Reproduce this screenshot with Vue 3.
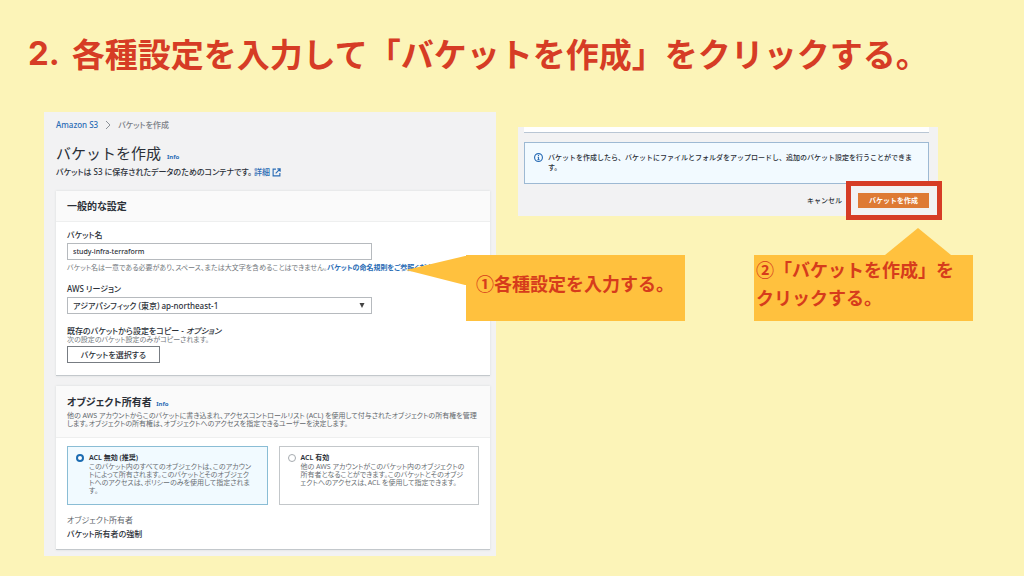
<script setup>
import { ref } from 'vue'

const bucketName = ref('study-infra-terraform')
const region = ref('ap-northeast-1')
const acl = ref('disabled')

const aclOptions = [
  {
    id: 'disabled',
    title: 'ACL 無効 (推奨)',
    lines: [
      'このバケット内のすべてのオブジェクトは、このアカウン',
      'トによって所有されます。このバケットとそのオブジェク',
      'トへのアクセスは、ポリシーのみを使用して指定されま',
      'す。',
    ],
  },
  {
    id: 'enabled',
    title: 'ACL 有効',
    lines: [
      '他の AWS アカウントがこのバケット内のオブジェクトの',
      '所有者となることができます。このバケットとそのオブジ',
      'ェクトへのアクセスは、ACL を使用して指定できます。',
    ],
  },
]
</script>

<template>
  <main class="slide">
    <h1 class="slide-title"><span class="step">2.</span><span>各種設定を入力して「バケットを作成」をクリックする。</span></h1>

    <div class="columns">
      <section class="panel console">
        <nav class="crumbs">
          <a href="#">Amazon S3</a>
          <svg class="chevron" viewBox="0 0 6 10"><path d="M1 1l4 4-4 4" /></svg>
          <span>バケットを作成</span>
        </nav>

        <h2 class="page-title">バケットを作成 <a class="info" href="#">Info</a></h2>
        <p class="lead">
          バケットは S3 に保存されたデータのためのコンテナです。
          <a href="#">詳細
            <svg class="external" viewBox="0 0 16 16"><path d="M7 2H2v12h12V9M9.500 1.500H14.500V6.500M14 2L6.500 9.500" /></svg>
          </a>
        </p>

        <section class="card general">
          <header class="card-head"><h3>一般的な設定</h3></header>
          <div class="card-body">
            <div class="field">
              <label for="bucket">バケット名</label>
              <input id="bucket" v-model="bucketName" class="control" type="text" />
              <p class="hint">バケット名は一意である必要があり、スペース、または大文字を含めることはできません。<a href="#">バケットの命名規則をご参照ください</a></p>
            </div>
            <div class="field">
              <label for="region">AWS リージョン</label>
              <div class="select-wrap">
                <select id="region" v-model="region" class="control">
                  <option value="ap-northeast-1">アジアパシフィック (東京) ap-northeast-1</option>
                </select>
                <svg class="caret" viewBox="0 0 6 6"><path d="M0 0h6L3 6z" /></svg>
              </div>
            </div>
            <div class="field">
              <span class="label">既存のバケットから設定をコピー - <i>オプション</i></span>
              <p class="hint near">次の設定のバケット設定のみがコピーされます。</p>
              <button class="choose" type="button">バケットを選択する</button>
            </div>
          </div>
        </section>

        <section class="card">
          <header class="card-head tall">
            <h3>オブジェクト所有者 <a class="info" href="#">Info</a></h3>
            <p class="hint dark">他の AWS アカウントからこのバケットに書き込まれ、アクセスコントロールリスト (ACL) を使用して付与されたオブジェクトの所有権を管理<br />します。オブジェクトの所有権は、オブジェクトへのアクセスを指定できるユーザーを決定します。</p>
          </header>
          <div class="card-body owner">
            <div class="tiles">
              <label v-for="o in aclOptions" :key="o.id" class="tile" :class="{ on: acl === o.id }">
                <input v-model="acl" type="radio" name="acl" :value="o.id" />
                <span class="tile-text">
                  <b>{{ o.title }}</b>
                  <span v-for="l in o.lines" :key="l" class="line">{{ l }}</span>
                </span>
              </label>
            </div>
            <dl>
              <dt>オブジェクト所有者</dt>
              <dd>バケット所有者の強制</dd>
            </dl>
          </div>
        </section>

        <aside class="callout first">
          <svg class="tail-left" viewBox="0 0 60 30"><path d="M0 15L59 1H60V30H59z" /></svg>
          ①各種設定を入力する。
        </aside>
      </section>

      <section class="panel footer-panel">
        <div class="card-end"></div>
        <div class="notice">
          <svg class="notice-icon" viewBox="0 0 16 16"><circle cx="8" cy="8" r="7" /><path d="M8 3.500v2M6.500 7.500H8v4.500M6 12h4" /></svg>
          <p>バケットを作成したら、バケットにファイルとフォルダをアップロードし、追加のバケット設定を行うことができま<br />す。</p>
        </div>
        <div class="actions">
          <button class="cancel" type="button">キャンセル</button>
          <div class="target">
            <button class="create" type="button">バケットを作成</button>
          </div>
        </div>

        <aside class="callout second">
          <svg class="tail-up" viewBox="0 0 66 27"><path d="M0 27L33 0l33 27z" /></svg>
          ②「バケットを作成」を<br />クリックする。
        </aside>
      </section>
    </div>
  </main>
</template>

<style>
html {
  background: #fcf4b8;
}
</style>

<style scoped>
.slide {
  min-height: 100vh;
  box-sizing: border-box;
  padding: 28px 86px 20px 44px;
  overflow: hidden;
  background: #fcf4b8;
  color: #2b3038;
  font-family: "Noto Sans", "Noto Sans CJK JP", sans-serif;
  font-size: 8px;
  line-height: 10px;
}
h1, h2, h3, p, dl, dd {
  margin: 0;
}
a {
  color: #2a6cb5;
  text-decoration: none;
}
button, input, select {
  font: inherit;
  color: inherit;
}
svg {
  fill: none;
  stroke: currentColor;
}
.slide-title {
  display: flex;
  gap: 12px;
  margin: 0 -60px 34px -16px;
  font-family: "Noto Sans CJK JP", sans-serif;
  font-size: 33px;
  line-height: 50px;
  font-weight: 700;
  color: #d63c25;
  white-space: nowrap;
}
.step {
  font-family: Inter, sans-serif;
}
.columns {
  display: grid;
  grid-template-columns: 452fr 420fr;
  gap: 22px;
  align-items: start;
}
.panel {
  position: relative;
  background: #f2f2f3;
}
.console {
  padding: 8px 6px 6px 12px;
}
.crumbs {
  display: flex;
  align-items: center;
  gap: 7px;
  font-feature-settings: "palt";
  font-weight: 500;
  color: #7b8086;
}
.chevron {
  width: 6px;
  height: 10px;
  stroke: #8c9298;
}
.page-title {
  margin-top: 13px;
  font-size: 15px;
  line-height: 20px;
  font-weight: 400;
}
.info {
  margin-left: 2px;
  font-size: 6px;
  font-weight: 700;
}
.lead {
  font-weight: 500;
  font-feature-settings: "palt";
}
.external {
  width: 9px;
  height: 9px;
  vertical-align: -2px;
  stroke-width: 2;
}
.card {
  background: #fff;
  border-bottom: 1px solid #c3c8cc;
  box-shadow: 0 0 2px #d5d8da;
}
.general {
  margin: 14px 0 10px;
}
.card-head {
  padding: 8px 11px;
  background: #fafafa;
  border-bottom: 1px solid #eeefef;
}
.card-head h3 {
  font-size: 10px;
  line-height: 14px;
  font-feature-settings: "palt";
}
.card-head.tall {
  padding: 9px 11px;
}
.card-body {
  display: flex;
  flex-direction: column;
  gap: 12px;
  padding: 8px 11px 12px;
}
.field {
  display: flex;
  flex-direction: column;
  align-items: flex-start;
}
.field label, .label {
  margin-bottom: 3px;
  font-weight: 500;
  font-feature-settings: "palt";
}
.field .label {
  margin-bottom: 0;
}
.control {
  box-sizing: border-box;
  width: 100%;
  height: 17px;
  padding: 0 5px;
  border: 1px solid #b6babe;
  border-radius: 0;
  background: #fff;
  font-size: 7px;
  font-weight: 500;
  appearance: none;
}
.field > .control, .select-wrap {
  width: 74%;
}
.select-wrap {
  position: relative;
}
.select-wrap .control {
  display: block;
  font-size: 8px;
  font-feature-settings: "palt";
}
.caret {
  position: absolute;
  top: 6px;
  right: 7px;
  width: 6px;
  height: 5px;
  fill: #444;
  stroke: none;
}
.hint {
  font-size: 7px;
  line-height: 8px;
  color: #73787d;
  white-space: nowrap;
  font-feature-settings: "palt";
}
.hint a {
  font-weight: 700;
}
.field .control + .hint {
  margin-top: 4px;
}
.near {
  margin-bottom: 2px;
}
.dark {
  margin-top: 1px;
  color: #62676c;
}
.choose {
  width: 93px;
  height: 17px;
  padding: 0;
  border: 1px solid #777c82;
  background: #fff;
  font-size: 8px;
  line-height: 10px;
  font-weight: 500;
  font-feature-settings: "palt";
}
.owner {
  gap: 10px;
  padding-top: 8px;
  padding-bottom: 10px;
}
.tiles {
  display: grid;
  grid-template-columns: 1fr 1fr;
  gap: 11px;
}
.tile {
  display: flex;
  gap: 5px;
  min-height: 50px;
  padding: 6px 8px 1px;
  border: 1px solid #c3c7ca;
}
.tile.on {
  border-color: #8abdd5;
  background: #f1faff;
}
.tile input {
  flex: none;
  box-sizing: border-box;
  width: 8px;
  height: 8px;
  margin: 1px 0 0;
  border: 1px solid #a6abb0;
  border-radius: 50%;
  background: #fff;
  appearance: none;
}
.tile input:checked {
  border: 2px solid #1c6cb2;
}
.tile b {
  display: block;
  font-size: 7px;
  font-weight: 600;
}
.line {
  display: block;
  font-size: 7px;
  line-height: 8px;
  color: #6a6f74;
  white-space: nowrap;
  font-feature-settings: "palt";
}
dl {
  display: flex;
  flex-direction: column;
  gap: 4px;
  font-feature-settings: "palt";
}
dt {
  color: #62676c;
}
dd {
  font-weight: 500;
}
.footer-panel {
  margin-top: 15px;
  padding: 0 9px 8px 6px;
}
.card-end {
  height: 5px;
  background: #fff;
  border-bottom: 1px solid #b9c6d4;
}
.notice {
  display: flex;
  gap: 5px;
  margin-top: 9px;
  padding: 10px 9px;
  border: 1px solid #9db9d3;
  background: #f2faff;
  font-size: 7px;
  font-weight: 500;
  white-space: nowrap;
}
.notice-icon {
  flex: none;
  width: 9px;
  height: 9px;
  color: #2a6cb5;
  stroke-width: 2;
}
.actions {
  display: flex;
  justify-content: flex-end;
  align-items: center;
  gap: 16px;
  margin-top: 9px;
  font-size: 7px;
}
.cancel {
  padding: 0;
  border: 0;
  background: none;
  font-weight: 500;
}
.target {
  position: relative;
}
.target::after {
  content: "";
  position: absolute;
  inset: -12px -13px -12px -12px;
  border: 5px solid #d63c25;
  pointer-events: none;
}
.create {
  display: block;
  width: 71px;
  height: 15px;
  padding: 0;
  border: 0;
  background: #de7a34;
  color: #fff;
  font-weight: 700;
}
.callout {
  position: absolute;
  z-index: 1;
  box-sizing: border-box;
  width: 219px;
  height: 66px;
  background: #ffc13e;
  color: #d63c1c;
  font-family: "Noto Sans CJK JP", sans-serif;
  font-size: 18px;
  line-height: 28px;
  font-weight: 700;
  white-space: nowrap;
}
.callout svg {
  position: absolute;
  fill: #ffc13e;
  stroke: none;
}
.first {
  top: 143px;
  left: calc(100% - 30px);
  padding: 14px 10px;
}
.second {
  top: 128px;
  right: -35px;
  padding: 0 2px;
}
.tail-left {
  top: 0;
  right: 100%;
  width: 60px;
  height: 30px;
}
.tail-up {
  bottom: 100%;
  left: 131px;
  width: 66px;
  height: 27px;
}
</style>
